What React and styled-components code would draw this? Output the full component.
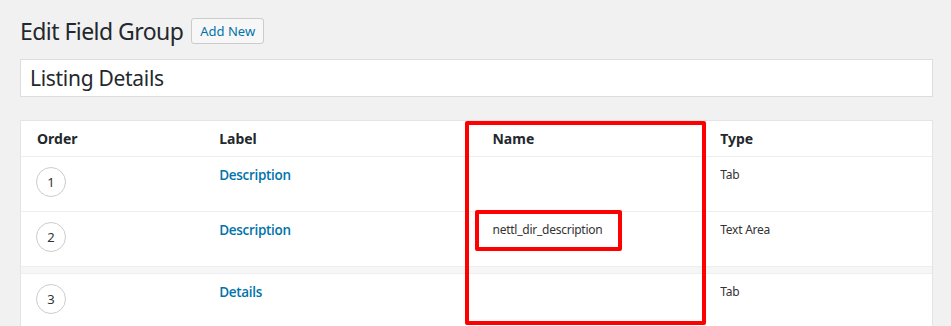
import styled, { createGlobalStyle } from 'styled-components';

const GlobalStyle = createGlobalStyle`
  html, body {
    margin: 0;
    overflow: hidden;
    background: #f1f1f1;
  }
  body {
    font-family: 'Noto Sans', 'Open Sans', sans-serif;
    color: #23282d;
  }
`;

const Page = styled.div`
  padding: 14px 18px 0 20px;
`;

const Header = styled.div`
  display: flex;
  align-items: center;
  gap: 8px;
`;

const Title = styled.h1`
  margin: 0;
  font-size: 23px;
  font-weight: 400;
  line-height: 34px;
  letter-spacing: -0.55px;
`;

const AddButton = styled.button`
  height: 26px;
  padding: 0 8px;
  border: 1px solid #ccc;
  border-radius: 3px;
  background: #f7f7f7;
  color: #0073aa;
  font-family: inherit;
  font-size: 13px;
  line-height: 24px;
`;

const TitleInput = styled.div`
  margin-top: 11px;
  height: 36px;
  display: flex;
  align-items: center;
  padding: 0 9px;
  border: 1px solid #ddd;
  background: #fff;
  font-size: 21px;
  letter-spacing: -0.3px;
`;

const Card = styled.div`
  position: relative;
  margin-top: 23px;
  border: 1px solid #e2e4e7;
  background: #fff;
`;

const Row = styled.div`
  display: grid;
  grid-template-columns: 20% 30% 25% 25%;
  height: ${p => (p.$head ? 35 : 54)}px;
  border-bottom: 1px solid #eee;
`;

const Gap = styled.div`
  height: 6px;
  background: #f6f6f6;
  border-bottom: 1px solid #eee;
`;

const HeadCell = styled.div`
  padding: 8px 16px 0;
  font-size: 14px;
  font-weight: 700;
  line-height: 20px;
`;

const Cell = styled.div`
  padding: 8px 16px 0;
  font-size: 12px;
  line-height: 20px;
  letter-spacing: -0.25px;
  color: #333;
`;

const LabelLink = styled.a`
  font-family: 'Open Sans', 'Noto Sans', sans-serif;
  font-size: 13.5px;
  font-weight: 600;
  color: #0073aa;
  letter-spacing: -0.3px;
`;

const Circle = styled.span`
  display: flex;
  align-items: center;
  justify-content: center;
  width: 28px;
  height: 28px;
  margin: 2px 0 0 -1px;
  border: 1px solid #ccc;
  border-radius: 50%;
  font-size: 13px;
  letter-spacing: 0;
  color: #333;
`;

const Mark = styled.div`
  position: absolute;
  border: 4px solid #ff0000;
  border-radius: 2px;
  left: ${p => p.$x}px;
  top: ${p => p.$y}px;
  width: ${p => p.$w}px;
  height: ${p => p.$h}px;
  box-sizing: border-box;
  pointer-events: none;
`;

const fields = [
  { order: 1, label: 'Description', name: '', type: 'Tab' },
  { order: 2, label: 'Description', name: 'nettl_dir_description', type: 'Text Area' },
  { order: 3, label: 'Details', name: '', type: 'Tab' },
];

export default function App() {
  return (
    <>
      <GlobalStyle />
      <Page>
        <Header>
          <Title>Edit Field Group</Title>
          <AddButton>Add New</AddButton>
        </Header>
        <TitleInput>Listing Details</TitleInput>
        <Card>
          <Row $head>
            <HeadCell>Order</HeadCell>
            <HeadCell>Label</HeadCell>
            <HeadCell>Name</HeadCell>
            <HeadCell>Type</HeadCell>
          </Row>
          {fields.map(f => (
            <div key={f.order}>
              {f.order === 3 && <Gap />}
              <Row>
                <Cell>
                  <Circle>{f.order}</Circle>
                </Cell>
                <Cell>
                  <LabelLink>{f.label}</LabelLink>
                </Cell>
                <Cell>{f.name}</Cell>
                <Cell>{f.type}</Cell>
              </Row>
            </div>
          ))}
          <Mark $x={444} $y={0} $w={241} $h={204} />
          <Mark $x={454} $y={89} $w={147} $h={41} />
        </Card>
      </Page>
    </>
  );
}
